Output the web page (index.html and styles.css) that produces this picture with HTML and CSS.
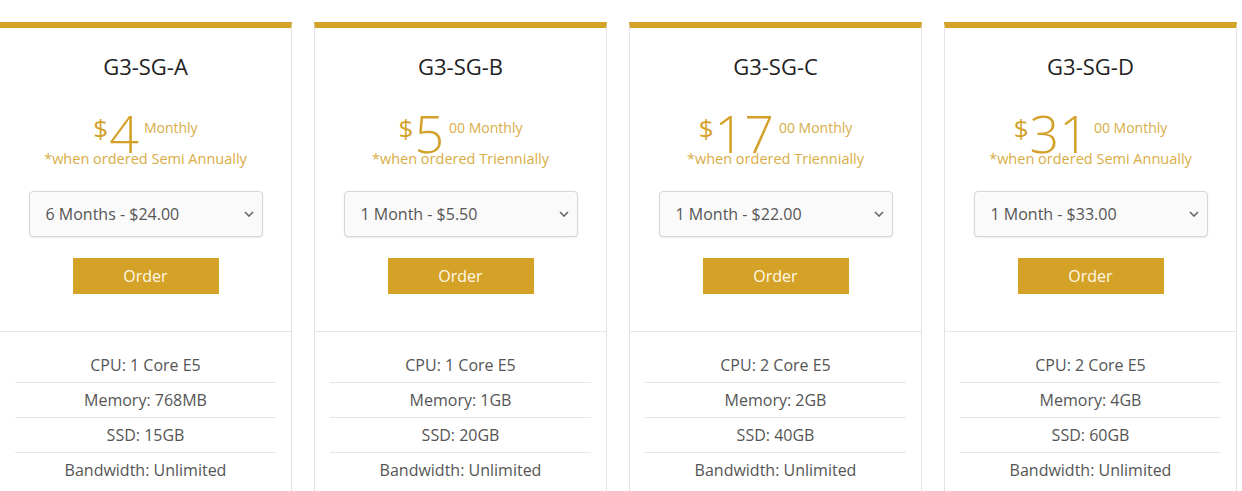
FILE: index.html
```html
<!DOCTYPE html>
<html lang="en">
<head>
<meta charset="utf-8">
<title>Plans</title>
<link rel="stylesheet" href="styles.css">
</head>
<body>
<div class="plans">
  <div class="card">
    <div class="card-head">
      <h3 class="title">G3-SG-A</h3>
      <div class="price"><span class="cur">$</span><span class="amt">4</span><span class="suffix">Monthly</span></div>
      <div class="note">*when ordered Semi Annually</div>
      <div class="select-wrap">
        <select class="cycle"><option>6 Months - $24.00</option></select>
        <svg class="chev" width="10" height="6" viewBox="0 0 10 6"><path d="M1 1l4 4 4-4" fill="none" stroke="#666" stroke-width="1.6"/></svg>
      </div>
      <button class="order">Order</button>
    </div>
    <ul class="features">
      <li>CPU: 1 Core E5</li>
      <li>Memory: 768MB</li>
      <li>SSD: 15GB</li>
      <li>Bandwidth: Unlimited</li>
    </ul>
  </div>
  <div class="card">
    <div class="card-head">
      <h3 class="title">G3-SG-B</h3>
      <div class="price"><span class="cur">$</span><span class="amt">5</span><span class="suffix">00 Monthly</span></div>
      <div class="note">*when ordered Triennially</div>
      <div class="select-wrap">
        <select class="cycle"><option>1 Month - $5.50</option></select>
        <svg class="chev" width="10" height="6" viewBox="0 0 10 6"><path d="M1 1l4 4 4-4" fill="none" stroke="#666" stroke-width="1.6"/></svg>
      </div>
      <button class="order">Order</button>
    </div>
    <ul class="features">
      <li>CPU: 1 Core E5</li>
      <li>Memory: 1GB</li>
      <li>SSD: 20GB</li>
      <li>Bandwidth: Unlimited</li>
    </ul>
  </div>
  <div class="card">
    <div class="card-head">
      <h3 class="title">G3-SG-C</h3>
      <div class="price"><span class="cur">$</span><span class="amt">17</span><span class="suffix">00 Monthly</span></div>
      <div class="note">*when ordered Triennially</div>
      <div class="select-wrap">
        <select class="cycle"><option>1 Month - $22.00</option></select>
        <svg class="chev" width="10" height="6" viewBox="0 0 10 6"><path d="M1 1l4 4 4-4" fill="none" stroke="#666" stroke-width="1.6"/></svg>
      </div>
      <button class="order">Order</button>
    </div>
    <ul class="features">
      <li>CPU: 2 Core E5</li>
      <li>Memory: 2GB</li>
      <li>SSD: 40GB</li>
      <li>Bandwidth: Unlimited</li>
    </ul>
  </div>
  <div class="card">
    <div class="card-head">
      <h3 class="title">G3-SG-D</h3>
      <div class="price"><span class="cur">$</span><span class="amt">31</span><span class="suffix">00 Monthly</span></div>
      <div class="note">*when ordered Semi Annually</div>
      <div class="select-wrap">
        <select class="cycle"><option>1 Month - $33.00</option></select>
        <svg class="chev" width="10" height="6" viewBox="0 0 10 6"><path d="M1 1l4 4 4-4" fill="none" stroke="#666" stroke-width="1.6"/></svg>
      </div>
      <button class="order">Order</button>
    </div>
    <ul class="features">
      <li>CPU: 2 Core E5</li>
      <li>Memory: 4GB</li>
      <li>SSD: 60GB</li>
      <li>Bandwidth: Unlimited</li>
    </ul>
  </div>
</div>
</body>
</html>
```

FILE: styles.css
```css
html, body {
  margin: 0;
  padding: 0;
  background: #fff;
  font-family: "Open Sans", "Liberation Sans", Arial, sans-serif;
  overflow: hidden;
}

.plans {
  display: flex;
  gap: 22px;
  padding-top: 22px;
  margin-left: -1px;
}

.card {
  flex: 0 0 293px;
  box-sizing: border-box;
  border: 1px solid #e2e2e2;
  border-top: 6px solid #d4a227;
  background: #fff;
  display: flex;
  flex-direction: column;
}

.card-head {
  display: flex;
  flex-direction: column;
  align-items: center;
  padding: 23px 0 37px;
  border-bottom: 1px solid #e6e6e6;
}

.title {
  margin: 0;
  font-size: 22px;
  font-weight: 400;
  line-height: 30px;
  color: #222;
}

.price {
  display: flex;
  justify-content: center;
  align-items: flex-start;
  height: 38px;
  margin-top: 33px;
  color: #d3a12a;
}

.cur {
  font-size: 26px;
  line-height: 26px;
  margin-top: 1px;
  margin-right: 1px;
}

.amt {
  font-size: 52px;
  line-height: 38px;
  font-weight: 300;
}

.suffix {
  font-size: 14px;
  line-height: 14px;
  margin-top: 7px;
  margin-left: 5px;
  color: #d7ad48;
}

.note {
  margin-top: -3px;
  font-size: 14.5px;
  line-height: 20px;
  color: #d8ad45;
}

.select-wrap {
  position: relative;
  margin-top: 22px;
  width: 234px;
  height: 46px;
}

.cycle {
  appearance: none;
  -webkit-appearance: none;
  width: 100%;
  height: 100%;
  box-sizing: border-box;
  border: 1px solid #d6d6d6;
  border-radius: 4px;
  background: #fafafa;
  box-shadow: 0 1px 2px rgba(0, 0, 0, 0.08);
  padding: 0 0 0 16px;
  font-family: inherit;
  font-size: 16px;
  color: #555;
}

.chev {
  position: absolute;
  right: 9px;
  top: 20px;
  pointer-events: none;
}

.order {
  margin-top: 21px;
  width: 146px;
  height: 36px;
  border: 0;
  background: #d4a227;
  color: #fff8e6;
  font-family: inherit;
  font-size: 16px;
  cursor: pointer;
}

.features {
  list-style: none;
  margin: 0;
  padding: 16px 15px 30px;
}

.features li {
  text-align: center;
  font-size: 16px;
  line-height: 34px;
  color: #555;
  border-bottom: 1px solid #e6e6e6;
}

.features li:last-child {
  border-bottom: 0;
}
```
